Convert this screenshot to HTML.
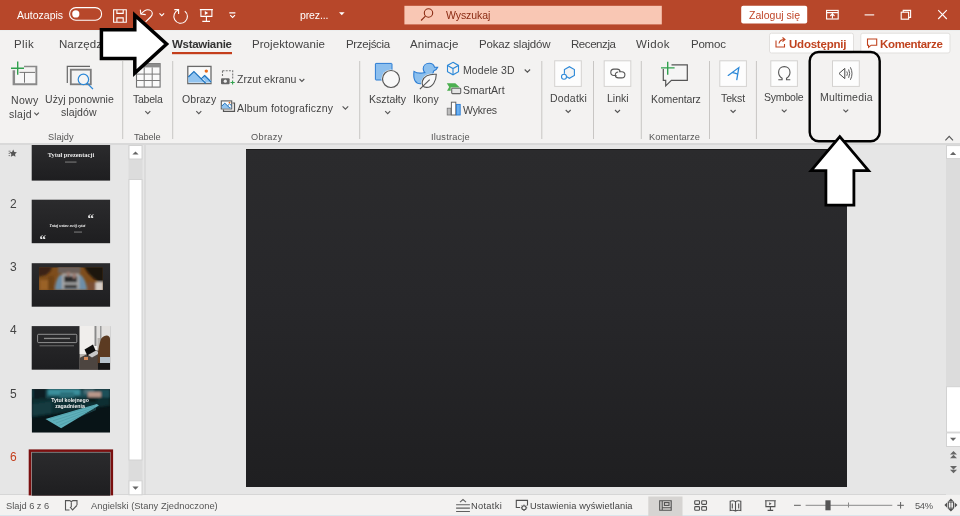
<!DOCTYPE html>
<html><head><meta charset="utf-8">
<style>
*{margin:0;padding:0;box-sizing:border-box}
html,body{width:960px;height:516px;overflow:hidden;background:#e6e6e6;font-family:"Liberation Sans",sans-serif}
.a{position:absolute;white-space:nowrap;line-height:normal;-webkit-font-smoothing:antialiased;will-change:transform}
svg{position:absolute;left:0;top:0}
</style></head><body>
<!-- backgrounds -->
<div class="a" style="left:0;top:0;width:960px;height:30px;background:#b7472a"></div>
<div class="a" style="left:0;top:30px;width:960px;height:113px;background:#f3f2f1"></div>
<div class="a" style="left:0;top:30px;width:960px;height:1px;background:#eceeee"></div>
<div class="a" style="left:0;top:143px;width:960px;height:2px;background:#d9d9d9"></div>
<div class="a" style="left:246px;top:149px;width:601px;height:338px;background:linear-gradient(180deg,#2b2b2d 0%,#27272a 45%,#1f1f21 100%);border-top:1px solid #1c1c1c"></div>
<div class="a" style="left:0;top:494px;width:960px;height:1px;background:#d6d6d6"></div>
<div class="a" style="left:0;top:495px;width:960px;height:21px;background:#f3f2f1"></div>
<div class="a" style="left:0;top:515px;width:960px;height:1px;background:#dbe6ec"></div>

<svg width="960" height="516" viewBox="0 0 960 516">
<defs>
<linearGradient id="sl" x1="0" y1="0" x2="0" y2="1"><stop offset="0" stop-color="#2b2b2d"/><stop offset="1" stop-color="#1e1e20"/></linearGradient>
</defs>
<!-- ===== TITLE BAR ===== -->
<g fill="none" stroke="#fff" stroke-width="1.1">
<rect x="69.6" y="7.6" width="32" height="12.6" rx="6.3"/>
<!-- save -->
<path d="M113.6 9.8h12.7v12.5h-12.7z M116.9 9.8v3.6h6.3v-3.6 M116.9 22.3v-4.4h6.3v4.4"/>
<!-- undo -->
<path d="M140.3 9.6l0.5 4.5 4.9 0.5"/>
<path d="M141.1 13.8C143.5 11.2 145.5 9.7 147.6 9.7 150.4 9.7 152.3 11.6 152.3 13.5 152.3 15 151.6 16 150.6 17L145.6 21.9"/>
<path d="M159.5 13.4l2.3 2.3 2.3-2.3"/>
<!-- redo circle -->
<path d="M178.6 10A6.8 6.8 0 1 0 184.8 11.1"/>
<path d="M174.3 9.6h4.3v4.3"/>
<!-- present -->
<path d="M199.8 9.6h13.1 M200.9 9.6v6.8h11v-6.8 M206.4 16.4v5 M202.3 21.4h7.7"/>
<path d="M229.3 12.9h6.1 M230.2 15.1l2.4 2.4 2.4-2.4"/>
</g>
<circle cx="75.8" cy="13.9" r="3.6" fill="#fff"/>
<path d="M204.8 10.9v4.1l3.4-2.05z" fill="#fff"/>
<path d="M339 12.2h5.6l-2.8 3z" fill="#fff"/>
<!-- search box -->
<rect x="404.4" y="5.8" width="257.4" height="18.6" fill="#f9c7b4"/>
<g fill="none" stroke="#8a2a12" stroke-width="1.1"><circle cx="428.5" cy="13" r="4.2"/><path d="M425.4 16.1l-4.3 4.4"/></g>
<rect x="741.2" y="5.8" width="66" height="17.7" rx="2" fill="#fff"/>
<g fill="none" stroke="#fff" stroke-width="1.1">
<rect x="826.6" y="10.4" width="11.6" height="8.6"/>
<path d="M826.6 12.6h11.6 M832.4 18.6v-4.5 M830.3 16l2.1-2.1 2.1 2.1"/>
<path d="M864.6 14.9h9.6"/>
<rect x="901.2" y="12.2" width="7.4" height="7"/>
<path d="M903.2 12.2v-1.8h7.4v7h-2"/>
<path d="M938.2 10.2l8.6 8.8 M946.8 10.2l-8.6 8.8"/>
</g>

<!-- ===== TABS ===== -->
<rect x="172" y="52" width="60" height="2.2" fill="#c43e1c"/>
<rect x="769.5" y="33.2" width="84" height="19.8" rx="2" fill="#fff" stroke="#e1dfdd" stroke-width="1"/>
<rect x="860.8" y="33.2" width="89.2" height="19.8" rx="2" fill="#fff" stroke="#e1dfdd" stroke-width="1"/>
<g fill="none" stroke="#c0431f" stroke-width="1.1">
<path d="M776 40.5v6.5h8.5v-3 M779 43.5c0.5-3 2.5-4 5.5-4 M782.5 37.5l2.5 2-2.5 2.2"/>
<path d="M867.5 39h9.2v6.2h-5.5l-2.6 2.2v-2.2h-1.1z"/>
</g>

<!-- ===== RIBBON ===== -->
<g fill="#c8c6c4">
<rect x="122.2" y="61" width="1" height="78"/>
<rect x="172.2" y="61" width="1" height="78"/>
<rect x="359.2" y="61" width="1" height="78"/>
<rect x="541.3" y="61" width="1" height="78"/>
<rect x="593" y="61" width="1" height="78"/>
<rect x="640.8" y="61" width="1" height="78"/>
<rect x="709" y="61" width="1" height="78"/>
<rect x="755.9" y="61" width="1" height="78"/>
</g>
<!-- boxed icons -->
<g fill="#fdfdfd" stroke="#d4d2d0" stroke-width="1">
<rect x="554.7" y="60.8" width="26.6" height="25.6"/>
<rect x="604.2" y="60.8" width="26.6" height="25.6"/>
<rect x="719.8" y="60.8" width="26.6" height="25.6"/>
<rect x="770.8" y="60.8" width="26.6" height="25.6"/>
<rect x="832.5" y="60.8" width="26.8" height="25.6"/>
</g>
<!-- chevrons -->
<g fill="none" stroke="#555" stroke-width="1.1">
<path d="M34.3 112.6l2.3 2.3 2.3-2.3"/>
<path d="M145.3 111.2l2.5 2.5 2.5-2.5"/>
<path d="M196.3 111.2l2.5 2.5 2.5-2.5"/>
<path d="M385.2 111.2l2.5 2.5 2.5-2.5"/>
<path d="M565.7 110l2.5 2.5 2.5-2.5"/>
<path d="M615 110l2.5 2.5 2.5-2.5"/>
<path d="M730.6 110l2.5 2.5 2.5-2.5"/>
<path d="M781.8 109.6l2.4 2.4 2.4-2.4"/>
<path d="M843.4 109.6l2.4 2.4 2.4-2.4"/>
<path d="M299.5 79l2.4 2.4 2.4-2.4"/>
<path d="M342.6 106.3l2.8 2.8 2.8-2.8"/>
<path d="M524.7 69.5l2.7 2.7 2.7-2.7"/>
</g>
<!-- nowy slajd -->
<g>
<path d="M12.6 70.2h2.5v13.1h20.3v-16h-11.4v-1.6h13.3v19.6h-24.7z" fill="#8a8a8a"/>
<path d="M15.6 72.9h19.5v10.2h-19.5z" fill="#f7f7f7"/>
<path d="M19.5 72.4h15.5 M24.5 72.4v10.3" stroke="#666" stroke-width="0.9" fill="none"/>
<path d="M11 68.2h13 M17.7 61.6v13.2" stroke="#30a14e" stroke-width="1.4" fill="none"/>
</g>
<!-- reuse slides -->
<g>
<path d="M67.3 83v-16.6h22.7" stroke="#666" stroke-width="1.2" fill="none"/>
<rect x="70.8" y="69.7" width="20" height="14.6" fill="#f2f2f2" stroke="#7d7d7d" stroke-width="1.8"/>
<circle cx="83.4" cy="79.4" r="5.2" fill="#f4f4f4" stroke="#2b88d8" stroke-width="1.2"/>
<path d="M87.2 83.3l5.8 5.8" stroke="#2b88d8" stroke-width="1.3"/>
</g>
<!-- table -->
<g>
<rect x="136.5" y="63.6" width="23.6" height="23.5" fill="#fafafa" stroke="#707070" stroke-width="1.1"/>
<rect x="136.5" y="63.6" width="23.6" height="3.8" fill="#8c8c8c"/>
<path d="M136.5 74.1h23.6 M136.5 80.5h23.6 M144.2 67.4v19.7 M152.2 67.4v19.7" stroke="#7a7a7a" stroke-width="1" fill="none"/>
</g>
<!-- pictures -->
<g>
<rect x="187.8" y="66.4" width="23.2" height="17.2" fill="#fafafa" stroke="#6a6a6a" stroke-width="1.3"/>
<path d="M188.3 77l5.6-5.5 10.5 10.2 0.5-1 -3 -3 3.2-3 6.3 6v1.9h-23.1z" fill="#92c4f0"/>
<path d="M188.3 77l5.6-5.5 12 12 M201.2 78.8l3.3-3.2 6.4 6.3" stroke="#1e73be" stroke-width="1.1" fill="none"/>
<circle cx="206.3" cy="71.1" r="1.7" fill="#e8691a"/>
</g>
<!-- screenshot -->
<g>
<path d="M222.5 70.8h10.2v8" stroke="#777" stroke-width="1.1" stroke-dasharray="2 1.2" fill="none"/>
<path d="M222.5 70.8v6" stroke="#777" stroke-width="1.1" stroke-dasharray="2 1.2" fill="none"/>
<rect x="221" y="78.2" width="8.6" height="6" rx="1" fill="#666"/>
<circle cx="225.3" cy="81.2" r="1.6" fill="#eee"/>
<path d="M230.5 82.5h4.2 M232.6 80.4v4.2" stroke="#30a14e" stroke-width="1.1"/>
</g>
<!-- album -->
<g>
<path d="M223.5 109.5v1.8h11v-8.3h-2" stroke="#555" stroke-width="1.2" fill="none"/>
<rect x="221.3" y="100.9" width="10.4" height="8" fill="#fafafa" stroke="#5a5a5a" stroke-width="1.1"/>
<path d="M221.8 106l3-2.8 5 4.6 1.5-1.6 0 2.3h-9.5z" fill="#92c4f0"/>
<path d="M221.8 106l3-2.8 5.2 5 M227.8 105.6l1.8-1.7 2 1.9" stroke="#1e73be" stroke-width="1" fill="none"/>
<circle cx="229.5" cy="102.6" r="0.9" fill="#e8691a"/>
</g>
<!-- shapes -->
<g>
<rect x="375.4" y="63.4" width="16.6" height="16.6" rx="0.6" fill="#8cbfee" stroke="#2b7cd3" stroke-width="1"/>
<circle cx="391" cy="79" r="9.6" fill="#f3f2f1"/>
<circle cx="391" cy="79" r="8.5" fill="#f8f8f8" stroke="#575757" stroke-width="1.2"/>
</g>
<!-- icons (duck + leaf) -->
<g>
<path transform="translate(0,1.2)" d="M414 70.2c2.2 1.6 5 2 8.3 1.6l2.5-0.4c-1-1-1.6-2.4-1.6-3.8 0-3.2 2.6-5.5 6-5.5 2.6 0 4.6 1.6 5.3 3.8l3.2 0.2c-0.8 2-2.2 3-4 3.6-0.2 2-1.2 3.6-2.8 4.8l-6 7.2c-1.5 0.6-3 0.8-4.6 0.8-4.6 0-7.4-3.8-6.3-12.3z" fill="#8cc0ee" stroke="#2b7cd3" stroke-width="1.1"/>
<path d="M436.3 74.3c-6.5-0.3-12 1.2-13.8 6.5-1.2 3.6 0.5 6.5 4 6.6 6 0.2 9.8-6.3 9.8-13.1z" fill="#f8f8f8" stroke="#f3f2f1" stroke-width="2.2"/>
<path d="M436.3 74.3c-6.5-0.3-12 1.2-13.8 6.5-1.2 3.6 0.5 6.5 4 6.6 6 0.2 9.8-6.3 9.8-13.1z" fill="#f8f8f8" stroke="#555" stroke-width="1.1"/>
<path d="M419.9 89.2l9.8-9.5" stroke="#555" stroke-width="1.1"/>
</g>
<!-- 3D cube -->
<g fill="none" stroke="#2b88d8" stroke-width="1.1">
<path d="M453 62.3l5.5 3.1v6.3l-5.5 3.1-5.5-3.1v-6.3z"/>
<path d="M447.5 65.4l5.5 3.1 5.5-3.1 M453 68.5v6.3"/>
</g>
<!-- smartart -->
<g>
<path d="M446.8 83.3h8.5l4.6 4.3h-9.2v3.1h-3.7l2.2-3.6z" fill="#4caf50"/>
<rect x="451.7" y="88.3" width="9" height="5.3" rx="0.8" fill="#e4e4e4" stroke="#666" stroke-width="1.1"/>
</g>
<!-- chart -->
<g>
<rect x="447.2" y="108.2" width="3.8" height="6.8" fill="#bdbdbd" stroke="#777" stroke-width="0.8"/>
<rect x="451.4" y="102.2" width="4.4" height="12.8" fill="#fff" stroke="#666" stroke-width="1"/>
<rect x="456.4" y="104.4" width="3.8" height="10.6" fill="#69aff0" stroke="#2b7cd3" stroke-width="0.9"/>
</g>
<!-- addins -->
<g fill="none" stroke="#2b88d8" stroke-width="1.1">
<path d="M564.4 73.8v-4.2l5-2.9 5 2.9v5.8l-5 2.9-2.6-1.5" fill="#f4f4f4"/>
<circle cx="564" cy="76.7" r="2.5"/>
</g>
<!-- link -->
<g fill="none" stroke="#555" stroke-width="1.1">
<path d="M616.5 75.5h-2.6c-1.7 0-3.1-1.4-3.1-3.2s1.4-3.2 3.1-3.2h3.2c1.7 0 2.9 1.2 3.1 2.7"/>
<path d="M619 71.7h2.8c1.7 0 3.1 1.4 3.1 3.1s-1.4 3.1-3.1 3.1h-3.4c-1.7 0-3-1.2-3.1-2.8s1.2-3.1 2.9-3.1"/>
</g>
<!-- comment -->
<g>
<path d="M671.5 64.8h15.8v15.5h-15.9l-5.7 5.6v-5.6h-2.4v-11.4" fill="#f5f5f5" stroke="#555" stroke-width="1.2"/>
<path d="M661 67.9h13.6 M667.7 61.8v13" stroke="#30a14e" stroke-width="1.4"/>
</g>
<!-- text A -->
<g fill="none" stroke="#2b88d8" stroke-width="1.3" stroke-linecap="round">
<path d="M728.2 75.4l10.6-7.8 -2 12"/>
<path d="M732.6 72.6c1.6 0.2 3 0.6 4.5 1.2"/>
</g>
<!-- omega -->
<path d="M778.3 79.8h3.8v-1.6c-2.2-1.4-3.5-3.6-3.5-6 0-3.4 2.5-5.6 5.7-5.6s5.7 2.2 5.7 5.6c0 2.4-1.3 4.6-3.5 6v1.6h3.8" fill="none" stroke="#555" stroke-width="1.1"/>
<!-- speaker -->
<g fill="none" stroke="#4a4a4a" stroke-width="1">
<path d="M844.8 68.4L839 73.5 844.8 78.6z"/>
<path d="M846.8 71.5Q848.1 73.6 846.8 75.8 M848.6 69.4Q850.8 73.6 848.6 77.8 M850.4 67.3Q853.6 73.6 850.4 79.8" stroke-width="0.9"/>
</g>
<!-- collapse ribbon -->
<path d="M945.4 140.4l3.8-4 3.8 4" fill="none" stroke="#555" stroke-width="1.1"/>

<!-- ===== LEFT PANEL ===== -->
<defs>
<filter id="bl1" x="-10%" y="-10%" width="120%" height="120%"><feGaussianBlur stdDeviation="0.9"/></filter>
<filter id="bl2" x="-10%" y="-10%" width="120%" height="120%"><feGaussianBlur stdDeviation="0.7"/></filter>
<clipPath id="c3"><rect x="38.9" y="267.3" width="64" height="22.7"/></clipPath>
<clipPath id="c4"><rect x="79.4" y="326.1" width="30.6" height="43.6"/></clipPath>
<clipPath id="c5"><rect x="31.7" y="389.1" width="78.3" height="43.6"/></clipPath>
</defs>
<!-- thumb 1 -->
<rect x="31.7" y="145" width="78.4" height="35.6" fill="url(#sl)"/>
<text x="71" y="157" font-family="Liberation Serif" font-weight="bold" font-size="6.4" fill="#e8e8e8" text-anchor="middle">Tytuł prezentacji</text>
<rect x="65" y="161.6" width="11.5" height="0.9" fill="#8a8a8a"/>
<!-- thumb 2 -->
<rect x="31.7" y="199.7" width="78.4" height="43.5" fill="url(#sl)"/>
<text x="87.5" y="223" font-family="Liberation Serif" font-weight="bold" font-size="13" fill="#f0f0f0">“</text>
<text x="39.5" y="243.5" font-family="Liberation Serif" font-weight="bold" font-size="13" fill="#f0f0f0">“</text>
<text x="67.5" y="226.8" font-family="Liberation Serif" font-style="italic" font-weight="bold" font-size="3.9" fill="#f4f4f4" text-anchor="middle">Tutaj wstaw swój cytat</text>
<rect x="74" y="231.6" width="8" height="0.9" fill="#8a8a8a"/>
<!-- thumb 3 -->
<rect x="31.7" y="263.2" width="78.4" height="43.5" fill="url(#sl)"/>
<g clip-path="url(#c3)">
<rect x="38.9" y="267.3" width="64" height="22.7" fill="#7e4d1c"/>
<g filter="url(#bl1)">
<path d="M38 266h14c0 4-3 7-6 9l-8 2z" fill="#3a2412"/>
<rect x="40" y="280" width="8" height="10" fill="#9a6226"/>
<rect x="48" y="276" width="6" height="14" fill="#6e4217"/>
<path d="M84 266h20v17c-4 0-9-3-12-6-3-3-6-6-8-11z" fill="#1e1208"/>
<rect x="88" y="282" width="8" height="9" fill="#7a5036"/>
<rect x="95.5" y="282" width="8" height="9" fill="#d4ccc6"/>
<path d="M55 290c0-5 1.5-11 4.5-15h21.5c3 3 5.5 8 6 15z" fill="#6d8ea8"/>
<path d="M58 266h22.5v7.5h-22.5z" fill="#6c615a"/>
<rect x="62" y="273.6" width="17.4" height="15.6" fill="#a8a8a8"/>
<rect x="64.3" y="276" width="12.8" height="6.3" fill="#2a2a2a"/>
<rect x="64.3" y="284.8" width="12.8" height="3.6" fill="#303030"/>
<rect x="66.8" y="272" width="3.2" height="4.5" fill="#9c7a70"/>
<rect x="72.6" y="273.5" width="3.2" height="5" fill="#9c7a70"/>
</g>
</g>
<!-- thumb 4 -->
<rect x="31.7" y="326.1" width="78.4" height="43.6" fill="url(#sl)"/>
<g clip-path="url(#c4)">
<rect x="79.4" y="326.1" width="30.6" height="43.6" fill="#b8b4b0"/>
<g filter="url(#bl2)">
<rect x="79.4" y="326" width="18" height="28" fill="#f0eeec"/>
<rect x="97" y="326" width="13" height="12" fill="#e2e0de"/>
<rect x="94.5" y="326" width="2" height="20" fill="#8a8a8a"/>
<rect x="100" y="326" width="1.5" height="16" fill="#9a9a9a"/>
<path d="M79.4 358l16-8 14.6 4v16h-30.6z" fill="#4d4540"/>
<path d="M84.5 349.5l8.5-5 3 7-8.5 4.5z" fill="#111"/>
<path d="M88 355l8-4.5 4 2.5-8 4.5z" fill="#c8c8c8"/>
<path d="M101 339c4-5 9-4 9 0v28h-12c-1-8 0-20 3-28z" fill="#5b3b22"/>
<rect x="100" y="357" width="10" height="7" fill="#b7c3cc"/>
<rect x="98" y="363" width="12" height="7" fill="#141414"/>
<rect x="84" y="357" width="4" height="3" fill="#d48a5a"/>
</g>
</g>
<rect x="37.6" y="334.3" width="39.2" height="8.3" rx="1" fill="none" stroke="#bdbdbd" stroke-width="0.7"/>
<rect x="44" y="337.8" width="26" height="1.3" fill="#8a8a8a"/>
<rect x="39.5" y="345.3" width="34.5" height="1" fill="#6e6e6e"/>
<!-- thumb 5 -->
<g clip-path="url(#c5)">
<rect x="31.7" y="389.1" width="78.4" height="43.6" fill="#081417"/>
<g filter="url(#bl1)">
<rect x="31.7" y="389.1" width="78.4" height="9" fill="#1d4f58"/>
<rect x="33" y="389" width="13" height="10" fill="#0a1c20"/>
<rect x="48" y="389" width="32" height="6" fill="#3a8f9c"/>
<rect x="60" y="392" width="14" height="6" fill="#2c6f7a"/>
<rect x="84" y="389" width="10" height="5" fill="#4a6f78"/>
<rect x="88" y="392" width="13" height="8" fill="#b8978a"/>
<path d="M31.7 399l58-2 20.3 0.5v8l-78.3 12z" fill="#0f2e33"/>
<path d="M31.7 404l20-3v12l-20 3z" fill="#123a40"/>
<path d="M86 400c4-1.5 9-1.2 12 0.5-2 1.8-8 2-12-0.5z" fill="#0b1416"/>
</g>
<path d="M45.5 419l51.4-15 2 1.4-37.8 22.8z" fill="#5fb0bb" filter="url(#bl2)"/>
<path d="M50 418.5l45-13 M53 420.8l42-13.5 M56 423l40-14.5 M59 425.5l37-16" stroke="#3f8a95" stroke-width="0.5" opacity="0.8"/>
</g>
<text x="70" y="402" font-family="Liberation Sans" font-weight="bold" font-size="5.2" fill="#f2f2f2" text-anchor="middle">Tytuł kolejnego</text>
<text x="70" y="408" font-family="Liberation Sans" font-weight="bold" font-size="5.2" fill="#f2f2f2" text-anchor="middle">zagadnienia</text>
<!-- thumb 6 (selected) -->
<rect x="28.7" y="449.4" width="84.4" height="46" fill="#7a0f0f"/>
<rect x="31.2" y="451.9" width="79.4" height="43.5" fill="#9a9a9a"/>
<rect x="32" y="452.6" width="78" height="43" fill="url(#sl)"/>
<!-- star -->
<path d="M13.2 149.6l1.15 2.35 2.55 0.35-1.85 1.8 0.45 2.55-2.3-1.2-2.3 1.2 0.45-2.55-1.85-1.8 2.55-0.35z" fill="#555"/>
<path d="M8.6 151.2h2 M8.6 153.4h1.5 M8.6 155.6h1.5" stroke="#666" stroke-width="0.8"/>
<!-- left scrollbar -->
<rect x="128.5" y="145" width="14" height="350" fill="#dcdcdc"/>
<rect x="129" y="145.5" width="13" height="13.5" fill="#fff" stroke="#d2d2d2" stroke-width="1"/>
<rect x="129" y="179.5" width="13" height="280.5" fill="#fff" stroke="#d2d2d2" stroke-width="1"/>
<rect x="129" y="480.8" width="13" height="14" fill="#fff" stroke="#d2d2d2" stroke-width="1"/>
<path d="M132.4 154.6h6.2l-3.1-3.2z" fill="#666"/>
<path d="M132.4 486.5h6.2l-3.1 3.2z" fill="#666"/>
<rect x="144.5" y="145" width="1" height="350" fill="#d0d0d0"/>
<!-- right scrollbar -->
<rect x="946" y="145" width="14" height="350" fill="#e6e6e6"/>
<rect x="946" y="158.7" width="14" height="228" fill="#dcdcdc"/>
<rect x="946.5" y="145.6" width="14" height="13" fill="#fff" stroke="#d2d2d2" stroke-width="1"/>
<rect x="946.5" y="386.7" width="14" height="45.4" fill="#fff" stroke="#d2d2d2" stroke-width="1"/>
<rect x="946.5" y="432.9" width="14" height="13.6" fill="#fff" stroke="#d2d2d2" stroke-width="1"/>
<path d="M950 155h6.2l-3.1-3.2z" fill="#666"/>
<path d="M950 437.8h6.2l-3.1 3.2z" fill="#666"/>
<path d="M950 454.4l3.5-3.4 3.5 3.4z M950 458.2l3.5-3.4 3.5 3.4z M950 466l3.5 3.4 3.5-3.4z M950 469.8l3.5 3.4 3.5-3.4z" fill="#666"/>

<!-- ===== STATUS BAR ===== -->
<rect x="648.3" y="496.5" width="34.2" height="19.5" fill="#d6d4d2"/>

<g fill="none" stroke="#555" stroke-width="1">
<!-- spell/book -->
<path d="M69.5 510h-4v-9.4h4.3l1.5 1.2 1.5-1.2h4.2v4.6 M71.3 501.8v5.5 M70 507l2.6 2.9 4.2-4.4" stroke="#555" stroke-width="1.1"/>
<!-- notes -->
<path d="M456.1 504.8h13.8 M456.1 508.1h13.8 M456.1 511.5h13.8 M460 502.2l3-2.6 3 2.6" stroke="#606060" stroke-width="1.1"/>
<!-- display settings -->
<path d="M520 507.5h-3.7v-7.1h11.2v5" stroke="#505050" stroke-width="1.1"/>
<circle cx="524" cy="507.8" r="2.1" stroke="#505050" stroke-width="1.1"/>
<path d="M524 504.6v1.1 M524 509.9v1.1 M520.8 507.8h1.1 M526.1 507.8h1.1 M521.8 505.6l0.8 0.8 M525.4 509.2l0.8 0.8 M521.8 510l0.8-0.8 M525.4 506.4l0.8-0.8" stroke="#505050" stroke-width="1"/>
<!-- normal view -->
<path d="M659.7 500.8h11.5v9.4h-11.5z M662.2 500.8v9.4 M662.2 507.8h9" stroke="#505050" stroke-width="1.1"/>
<rect x="664.4" y="502.6" width="4.6" height="2.8" stroke="#505050" stroke-width="1.1"/>
<!-- sorter -->
<g stroke="#505050" stroke-width="1.1">
<rect x="694.7" y="500.8" width="4.8" height="3.6" rx="0.8"/><rect x="701.7" y="500.8" width="4.8" height="3.6" rx="0.8"/>
<rect x="694.7" y="506.6" width="4.8" height="3.6" rx="0.8"/><rect x="701.7" y="506.6" width="4.8" height="3.6" rx="0.8"/>
</g>
<!-- reading -->
<path d="M730.2 501.2c1.8-0.6 3.6-0.6 5.3 0.4 1.7-1 3.5-1 5.3-0.4v9.4c-1.8-0.6-3.6-0.6-5.3 0.4-1.7-1-3.5-1-5.3-0.4z M735.5 501.6v9.4 M732.3 503.5v5 M738.7 503.5v5" stroke="#505050" stroke-width="1.1"/>
<!-- slideshow -->
<path d="M765 500.8h10.8 M765.9 500.8v5.8h9v-5.8 M770.4 506.6v3.6 M767.6 510.4h5.6" stroke="#505050" stroke-width="1.1"/><path d="M769.2 502.3v3l2.4-1.5z" fill="#505050" stroke="none"/>
<!-- zoom -->
<path d="M794 505.3h6.8 M897.3 505.3h6.6 M900.6 502v6.6" stroke="#606060" stroke-width="1"/>
</g>
<rect x="805.6" y="504.8" width="86.7" height="1" fill="#8a8a8a"/>
<rect x="848" y="502.5" width="1" height="5" fill="#8a8a8a"/>
<rect x="825.4" y="500.3" width="5.2" height="10" fill="#555"/>
<g fill="none" stroke="#555" stroke-width="1.1">
<rect x="948.3" y="502" width="5.2" height="6.2" stroke="#505050" stroke-width="1.1"/>
<path d="M950.9 502v6.2" stroke="#505050" stroke-width="0.8"/>
<path d="M948.3 501.2l2.6-2.6 2.6 2.6z M948.3 509l2.6 2.6 2.6-2.6z M947.1 502.5l-2.7 2.6 2.7 2.6z M954.7 502.5l2.7 2.6-2.7 2.6z" fill="#505050" stroke="none"/>
</g>
</svg>

<div class="a" style="left:17.47px;top:8.98px;font-size:10.5px;color:#fff;letter-spacing:-0.009px">Autozapis</div>
<div class="a" style="left:300.17px;top:9.23px;font-size:10.5px;color:#fff;letter-spacing:-0.106px">prez...</div>
<div class="a" style="left:446.07px;top:8.78px;font-size:10.5px;color:#8a2a12;letter-spacing:-0.071px">Wyszukaj</div>
<div class="a" style="left:748.67px;top:9.18px;font-size:10.5px;color:#c0472a;letter-spacing:0.027px">Zaloguj się</div>
<div class="a" style="left:14.31px;top:38.23px;font-size:11.5px;color:#444;letter-spacing:0.373px">Plik</div>
<div class="a" style="left:58.91px;top:38.23px;font-size:11.5px;color:#444;letter-spacing:0.009px">Narzędzia główne</div>
<div class="a" style="left:171.81px;top:38.23px;font-size:11.5px;color:#333;letter-spacing:-0.299px;font-weight:bold">Wstawianie</div>
<div class="a" style="left:251.81px;top:38.23px;font-size:11.5px;color:#444;letter-spacing:0.060px">Projektowanie</div>
<div class="a" style="left:345.61px;top:38.23px;font-size:11.5px;color:#444;letter-spacing:-0.313px">Przejścia</div>
<div class="a" style="left:410.06px;top:38.23px;font-size:11.5px;color:#444;letter-spacing:0.155px">Animacje</div>
<div class="a" style="left:478.81px;top:38.23px;font-size:11.5px;color:#444;letter-spacing:-0.155px">Pokaz slajdów</div>
<div class="a" style="left:570.56px;top:38.23px;font-size:11.5px;color:#444;letter-spacing:-0.436px">Recenzja</div>
<div class="a" style="left:636.31px;top:38.23px;font-size:11.5px;color:#444;letter-spacing:0.362px">Widok</div>
<div class="a" style="left:690.56px;top:38.23px;font-size:11.5px;color:#444;letter-spacing:-0.224px">Pomoc</div>
<div class="a" style="left:788.81px;top:38.23px;font-size:11.5px;color:#c0431f;letter-spacing:-0.225px;font-weight:bold">Udostępnij</div>
<div class="a" style="left:879.91px;top:38.23px;font-size:11.5px;color:#c0431f;letter-spacing:-0.336px;font-weight:bold">Komentarze</div>
<div class="a" style="left:11.07px;top:94.38px;font-size:10.5px;color:#444;letter-spacing:0.295px">Nowy</div>
<div class="a" style="left:8.97px;top:107.98px;font-size:10.5px;color:#444;letter-spacing:0.260px">slajd</div>
<div class="a" style="left:44.87px;top:93.08px;font-size:10.5px;color:#444;letter-spacing:0.046px">Użyj ponownie</div>
<div class="a" style="left:61.37px;top:106.38px;font-size:10.5px;color:#444;letter-spacing:0.086px">slajdów</div>
<div class="a" style="left:132.87px;top:92.98px;font-size:10.5px;color:#444;letter-spacing:-0.241px">Tabela</div>
<div class="a" style="left:182.07px;top:92.98px;font-size:10.5px;color:#444;letter-spacing:0.061px">Obrazy</div>
<div class="a" style="left:236.57px;top:73.28px;font-size:10.5px;color:#444;letter-spacing:0.045px">Zrzut ekranu</div>
<div class="a" style="left:236.57px;top:102.28px;font-size:10.5px;color:#444;letter-spacing:0.207px">Album fotograficzny</div>
<div class="a" style="left:368.97px;top:93.48px;font-size:10.5px;color:#444;letter-spacing:0.026px">Kształty</div>
<div class="a" style="left:412.97px;top:93.48px;font-size:10.5px;color:#444;letter-spacing:0.185px">Ikony</div>
<div class="a" style="left:462.62px;top:64.03px;font-size:10.5px;color:#444;letter-spacing:0.096px">Modele 3D</div>
<div class="a" style="left:462.62px;top:84.03px;font-size:10.5px;color:#444;letter-spacing:0.018px">SmartArt</div>
<div class="a" style="left:462.62px;top:104.03px;font-size:10.5px;color:#444;letter-spacing:-0.171px">Wykres</div>
<div class="a" style="left:549.87px;top:91.53px;font-size:10.5px;color:#444;letter-spacing:0.198px">Dodatki</div>
<div class="a" style="left:606.87px;top:91.53px;font-size:10.5px;color:#444;letter-spacing:-0.015px">Linki</div>
<div class="a" style="left:650.62px;top:92.78px;font-size:10.5px;color:#444;letter-spacing:-0.123px">Komentarz</div>
<div class="a" style="left:721.37px;top:91.53px;font-size:10.5px;color:#444;letter-spacing:-0.116px">Tekst</div>
<div class="a" style="left:764.37px;top:91.08px;font-size:10.5px;color:#444;letter-spacing:-0.202px">Symbole</div>
<div class="a" style="left:819.67px;top:91.08px;font-size:10.5px;color:#444;letter-spacing:0.197px">Multimedia</div>
<div class="a" style="left:48.25px;top:131.78px;font-size:9.2px;color:#555;letter-spacing:0.138px">Slajdy</div>
<div class="a" style="left:134.25px;top:131.78px;font-size:9.2px;color:#555;letter-spacing:-0.092px">Tabele</div>
<div class="a" style="left:250.65px;top:131.78px;font-size:9.2px;color:#555;letter-spacing:0.339px">Obrazy</div>
<div class="a" style="left:431.20px;top:131.78px;font-size:9.2px;color:#555;letter-spacing:0.212px">Ilustracje</div>
<div class="a" style="left:649.45px;top:131.78px;font-size:9.2px;color:#555;letter-spacing:0.153px">Komentarze</div>
<div class="a" style="left:6.14px;top:500.90px;font-size:9.3px;color:#555;letter-spacing:-0.019px">Slajd 6 z 6</div>
<div class="a" style="left:91.34px;top:500.90px;font-size:9.3px;color:#555;letter-spacing:0.041px">Angielski (Stany Zjednoczone)</div>
<div class="a" style="left:471.14px;top:500.90px;font-size:9.3px;color:#444;letter-spacing:0.299px">Notatki</div>
<div class="a" style="left:530.14px;top:500.90px;font-size:9.3px;color:#444;letter-spacing:0.104px">Ustawienia wyświetlania</div>
<div class="a" style="left:915.34px;top:500.90px;font-size:9.3px;color:#555;letter-spacing:-0.340px">54%</div>
<div class="a" style="left:9.78px;top:197.10px;font-size:12px;color:#444;letter-spacing:0.000px">2</div>
<div class="a" style="left:9.78px;top:260.10px;font-size:12px;color:#444;letter-spacing:0.000px">3</div>
<div class="a" style="left:9.78px;top:323.40px;font-size:12px;color:#444;letter-spacing:0.000px">4</div>
<div class="a" style="left:9.78px;top:386.50px;font-size:12px;color:#444;letter-spacing:0.000px">5</div>
<div class="a" style="left:10.08px;top:449.90px;font-size:12px;color:#c43e1c;letter-spacing:0.000px">6</div>

<!-- ===== ANNOTATIONS ===== -->
<svg width="960" height="516" viewBox="0 0 960 516">
<path d="M101.4 29.8h33.4v-14.6l31.8 28.8-31.8 29v-14.5h-33.4z" fill="#fff" stroke="#000" stroke-width="3.5" stroke-linejoin="miter"/>
<rect x="809.7" y="52" width="70" height="89.3" rx="9" fill="none" stroke="#000" stroke-width="2.4"/>
<path d="M839.8 136.6L868.5 170.6H853.9V205.2H825.9V170.6H811.1z" fill="#fff" stroke="#000" stroke-width="2.8" stroke-linejoin="miter"/>
</svg>
</body></html>
